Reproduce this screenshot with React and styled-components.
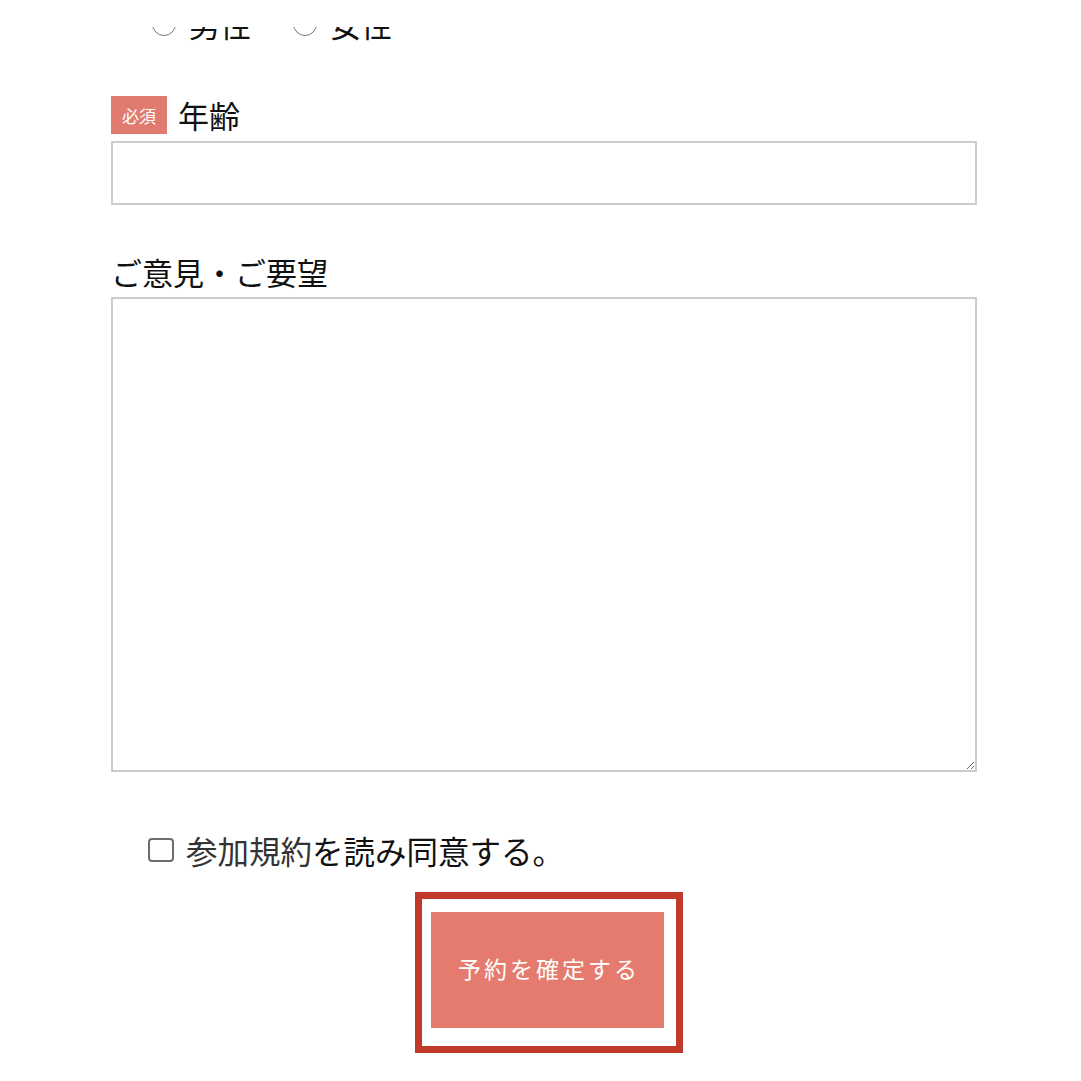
import React from "react";
import styled, { createGlobalStyle } from "styled-components";

const Global = createGlobalStyle`
  html, body { margin: 0; padding: 0; background: #fff; }
  body {
    font-family: "Noto Sans CJK JP", "Noto Sans", sans-serif;
    color: #111;
  }
  * { box-sizing: border-box; }
`;

const TopCover = styled.div`
  position: fixed;
  top: 0;
  left: 0;
  right: 0;
  height: 27px;
  background: #fff;
  z-index: 10;
`;

const Form = styled.form`
  padding: 0 104px 40px 111px;
  display: flex;
  flex-direction: column;
`;

const RadioRow = styled.div`
  margin-top: 10px;
  height: 28px;
  padding-left: 41px;
  display: flex;
  align-items: center;
  gap: 42px;
`;

const RadioLabel = styled.label`
  display: flex;
  align-items: center;
  gap: 13px;
  font-size: 31px;
  line-height: 28px;
  color: #111;
`;

const Radio = styled.input.attrs({ type: "radio" })`
  appearance: none;
  margin: 0;
  width: 24px;
  height: 24px;
  border: 1.5px solid #767676;
  border-radius: 50%;
  background: #fff;
`;

const Field = styled.div`
  display: flex;
  flex-direction: column;
  margin-top: ${(p) => p.$top}px;
`;

const LabelRow = styled.div`
  display: flex;
  align-items: center;
  gap: 11px;
  height: 38px;
  margin-bottom: ${(p) => p.$gap}px;
`;

const Badge = styled.span`
  display: inline-flex;
  align-items: center;
  justify-content: center;
  height: 38px;
  width: 56px;
  background: #e27b6f;
  color: #fff;
  font-size: 17px;
  letter-spacing: 0;
`;

const LabelText = styled.span`
  font-size: 31px;
  line-height: 38px;
  color: #111;
`;

const TextInput = styled.input`
  width: 100%;
  height: 64px;
  border: 2px solid #cccccc;
  border-radius: 0;
  padding: 0 12px;
  font-size: 24px;
  font-family: inherit;
  outline: none;
`;

const TextArea = styled.textarea`
  width: 100%;
  height: 475px;
  border: 2px solid #cccccc;
  border-radius: 0;
  padding: 12px;
  font-size: 24px;
  font-family: inherit;
  outline: none;
  resize: vertical;
  display: block;
`;

const AgreeRow = styled.label`
  margin-top: 59px;
  height: 38px;
  padding-left: 37px;
  display: flex;
  align-items: center;
  gap: 12px;
  font-size: 31.5px;
  line-height: 38px;
`;

const Check = styled.input.attrs({ type: "checkbox" })`
  appearance: none;
  margin: 0;
  width: 26px;
  height: 24px;
  border: 2px solid #6d6d6d;
  border-radius: 4px;
  background: #fff;
`;

const TermsLink = styled.span`
  color: #333;
`;

const SubmitRow = styled.div`
  margin-top: 23px;
  padding-left: 304px;
  display: flex;
`;

const SubmitFrame = styled.div`
  border: 7px solid #c0392b;
  padding: 13px 12px 18px 9px;
  display: flex;
`;

const SubmitButton = styled.button`
  width: 233px;
  height: 116px;
  border: none;
  background: #e47b6e;
  color: #fff;
  font-family: inherit;
  font-size: 23px;
  letter-spacing: 3px;
  font-weight: 400;
  padding: 0 0 4px 3px;
  cursor: pointer;
`;

export default function App() {
  return (
    <>
      <Global />
      <TopCover />
      <Form onSubmit={(e) => e.preventDefault()}>
        <RadioRow>
          <RadioLabel>
            <Radio name="gender" />
            男性
          </RadioLabel>
          <RadioLabel>
            <Radio name="gender" />
            女性
          </RadioLabel>
        </RadioRow>

        <Field $top={58}>
          <LabelRow $gap={7}>
            <Badge>必須</Badge>
            <LabelText>年齢</LabelText>
          </LabelRow>
          <TextInput type="text" />
        </Field>

        <Field $top={48}>
          <LabelRow $gap={6}>
            <LabelText>ご意見・ご要望</LabelText>
          </LabelRow>
          <TextArea />
        </Field>

        <AgreeRow>
          <Check />
          <span>
            <TermsLink>参加規約</TermsLink>を読み同意する。
          </span>
        </AgreeRow>

        <SubmitRow>
          <SubmitFrame>
            <SubmitButton type="submit">予約を確定する</SubmitButton>
          </SubmitFrame>
        </SubmitRow>
      </Form>
    </>
  );
}
